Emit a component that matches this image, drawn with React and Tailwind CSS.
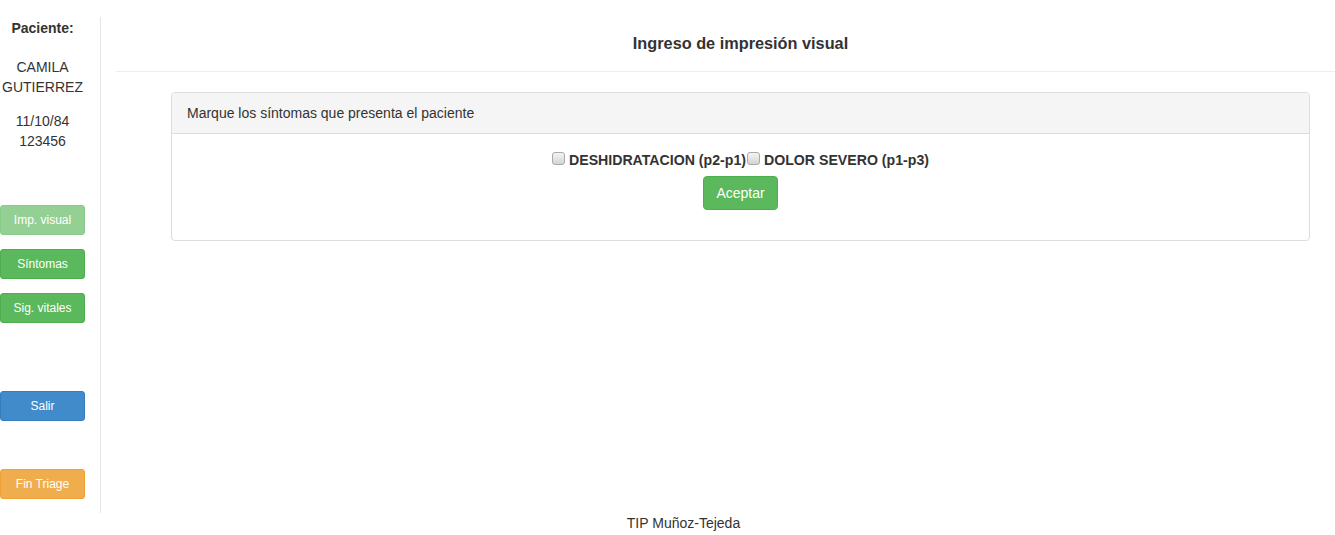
import React from "react";

const sideBtn =
  "block w-[85px] h-[30px] rounded-[3px] border text-white text-[12px] leading-[18px] text-center";

const cb =
  "appearance-none w-[13px] h-[13px] m-0 mr-[4px] -mt-[3px] rounded-[3px] border border-[#a9a9a9] bg-gradient-to-b from-[#f4f4f4] to-[#d4d4d4] shrink-0";

export default function App() {
  return (
    <div
      className="w-[1335px] min-h-[535px] bg-white text-[#333] text-[14px] leading-[20px]"
      style={{ fontFamily: '"Liberation Sans", Arial, sans-serif' }}
    >
      <div className="flex">
        {/* Sidebar */}
        <div className="w-[101px] shrink-0 mt-[17px] pr-[15px] border-r border-[#e5e5e5] pb-[14px]">
          <div className="w-[85px] flex flex-col items-center text-center">
            <div className="font-bold mt-px">Paciente:</div>
            <div className="mt-[19px]">CAMILA</div>
            <div>GUTIERREZ</div>
            <div className="mt-[14px]">11/10/84</div>
            <div>123456</div>
          </div>
          <div className="flex flex-col mt-[54px]">
            <button className={`${sideBtn} bg-[#5cb85c] border-[#4cae4c] opacity-65`}>
              Imp. visual
            </button>
            <button className={`${sideBtn} mt-[14px] bg-[#5cb85c] border-[#4cae4c]`}>
              Síntomas
            </button>
            <button className={`${sideBtn} mt-[14px] bg-[#5cb85c] border-[#4cae4c]`}>
              Sig. vitales
            </button>
            <button className={`${sideBtn} mt-[68px] bg-[#428bca] border-[#357ebd]`}>
              Salir
            </button>
            <button className={`${sideBtn} mt-[48px] bg-[#f0ad4e] border-[#eea236]`}>
              Fin Triage
            </button>
          </div>
        </div>

        {/* Main */}
        <div className="flex-1 pl-[15px] pt-[33px]">
          <div className="ml-[55px] mr-[25px] text-center font-bold text-[16.3px] leading-[20px]">
            Ingreso de impresión visual
          </div>
          <div className="mt-[18px] border-t border-[#eeeeee]" />
          <div className="ml-[55px] mr-[25px] mt-[20px] border border-[#dddddd] rounded-[4px]">
            <div className="bg-[#f5f5f5] border-b border-[#dddddd] px-[15px] py-[10px] rounded-t-[3px]">
              Marque los síntomas que presenta el paciente
            </div>
            <div className="px-[15px] pt-[16px] pb-[30px] flex flex-col items-center">
              <div className="flex items-center font-bold h-[20px] text-[14.15px]">
                <label className="flex items-center">
                  <input type="checkbox" className={cb} />
                  <span>DESHIDRATACION (p2-p1)</span>
                </label>
                <label className="flex items-center ml-px">
                  <input type="checkbox" className={cb} />
                  <span>DOLOR SEVERO (p1-p3)</span>
                </label>
              </div>
              <button className="mt-[6px] h-[34px] px-[12px] bg-[#5cb85c] border border-[#4cae4c] rounded-[4px] text-white text-[14px] leading-[20px]">
                Aceptar
              </button>
            </div>
          </div>
        </div>
      </div>

      {/* Footer */}
      <div className="text-center pl-[32px] leading-[20px]">TIP Muñoz-Tejeda</div>
    </div>
  );
}
